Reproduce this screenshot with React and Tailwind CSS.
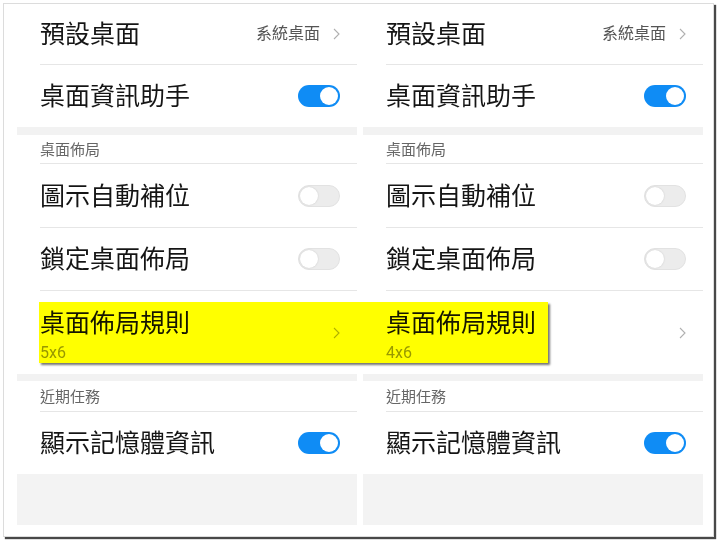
import React from "react"

const font = { fontFamily: 'Roboto, "Noto Sans CJK TC", sans-serif' }

function Chevron() {
  return (
    <svg width="7" height="12" viewBox="0 0 7 12" className="shrink-0">
      <polyline points="1,1 6,6 1,11" fill="none" stroke="#b0b0b0" strokeWidth="1.1" />
    </svg>
  )
}

function Toggle({ on }) {
  if (on) {
    return (
      <div className="w-[42px] h-[22px] rounded-full bg-[#0f8cf5] flex items-center justify-end pr-[2px] shrink-0">
        <div className="w-[18px] h-[18px] rounded-full bg-white" />
      </div>
    )
  }
  return (
    <div className="w-[42px] h-[22px] rounded-full bg-[#ececec] border border-[#e2e2e2] flex items-center pl-[1px] shrink-0">
      <div className="w-[18px] h-[18px] rounded-full bg-white shadow-[0_0_2px_rgba(0,0,0,0.15)]" />
    </div>
  )
}

function Row({ title, h, right, divider = true }) {
  return (
    <div className="pl-[23px]">
      <div
        className={`flex items-center justify-between pr-[17px] ${divider ? "border-b border-[#e6e6e6]" : ""}`}
        style={{ height: h }}
      >
        <span className="text-[25px] leading-none text-[#151515] mt-[1px]">{title}</span>
        {right}
      </div>
    </div>
  )
}

function Section({ title, h }) {
  return (
    <div className="pl-[23px]">
      <div className="flex items-center border-b border-[#e6e6e6]" style={{ height: h }}>
        <span className="text-[15px] leading-none text-[#666] mt-[2px]">{title}</span>
      </div>
    </div>
  )
}

function Panel({ grid }) {
  return (
    <div className="w-[340px] flex flex-col">
      <Row
        title="預設桌面"
        h={61}
        right={
          <div className="flex items-center gap-[13px]">
            <span className="text-[16px] leading-none text-[#555]">系統桌面</span>
            <Chevron />
          </div>
        }
      />
      <Row title="桌面資訊助手" h={62} divider={false} right={<Toggle on />} />
      <div className="h-[8px] bg-[#f2f2f2]" />
      <Section title="桌面佈局" h={29} />
      <Row title="圖示自動補位" h={64} right={<Toggle />} />
      <Row title="鎖定桌面佈局" h={63} right={<Toggle />} />
      <div className="pl-[23px] pr-[17px] h-[83px] flex items-center justify-between">
        <div className="flex flex-col">
          <span className="text-[25px] leading-none text-[#151515] mt-[6px]">桌面佈局規則</span>
          <span className="text-[16px] leading-none text-[#999] mt-[9px]">{grid}</span>
        </div>
        <Chevron />
      </div>
      <div className="h-[7px] bg-[#f2f2f2]" />
      <Section title="近期任務" h={31} />
      <Row title="顯示記憶體資訊" h={62} divider={false} right={<Toggle on />} />
      <div className="h-[51px] bg-[#f3f3f3]" />
    </div>
  )
}

export default function App() {
  return (
    <div className="w-[720px] h-[543px] bg-white relative overflow-hidden" style={font}>
      <div className="ml-[3px] mt-[3px] w-[711px] h-[534px] border border-[#dcdcdc] bg-white shadow-[2px_2px_1px_rgba(40,40,40,0.85)]">
        <div className="flex gap-[6px] pl-[13px]">
          <Panel grid="5x6" />
          <Panel grid="4x6" />
        </div>
      </div>
      <div className="absolute left-[39px] top-[302px] w-[509px] h-[61px] bg-[#ffff00] mix-blend-multiply shadow-[2px_2px_2px_rgba(60,60,60,0.7)]" />
    </div>
  )
}
